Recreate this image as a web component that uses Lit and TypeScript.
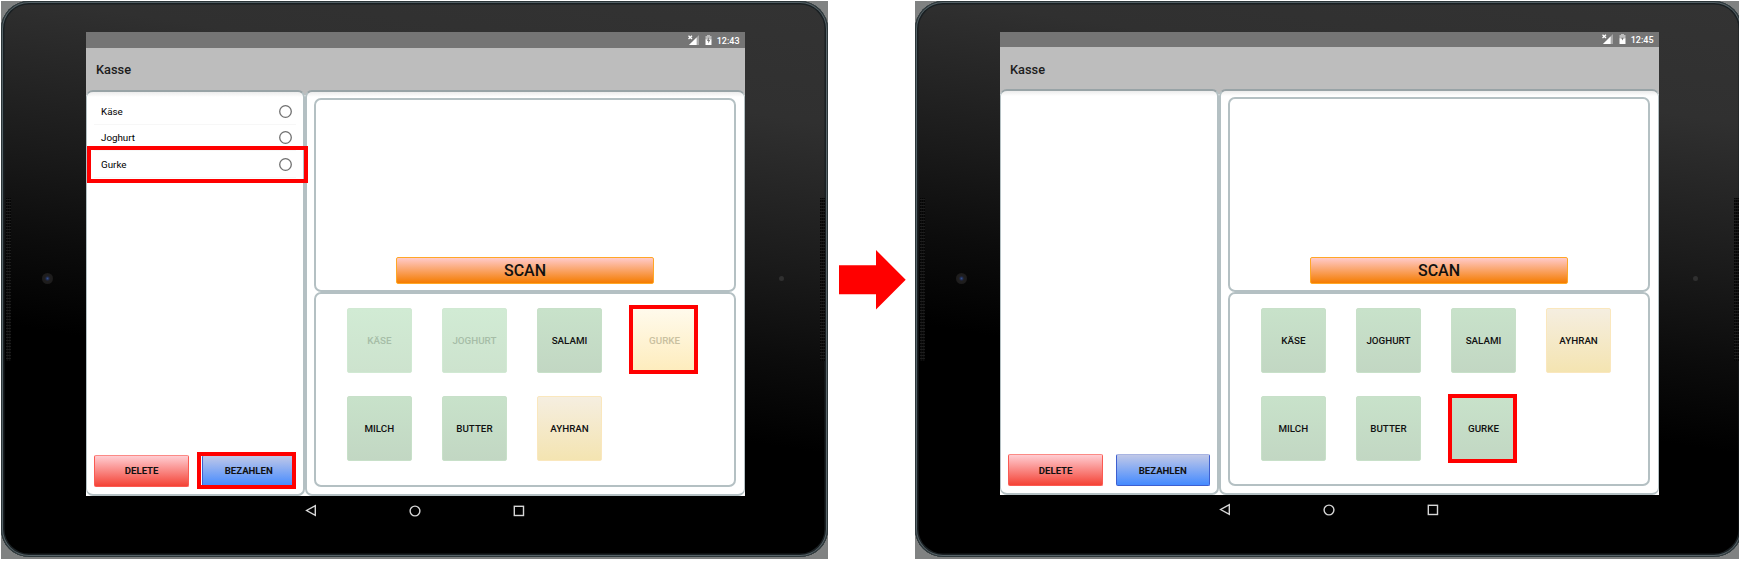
import { LitElement, html, css, svg, nothing } from "lit";
import { customElement, property } from "lit/decorators.js";
import { classMap } from "lit/directives/class-map.js";

interface Product {
  name: string;
  tone: "green" | "cream";
  used?: boolean;
  marked?: boolean;
}

@customElement("pos-tablet")
class PosTablet extends LitElement {
  @property() time = "";
  @property({ type: Boolean }) charging = false;
  @property({ type: Boolean }) payMarked = false;
  @property({ attribute: false }) cart: { name: string; marked?: boolean }[] = [];
  @property({ attribute: false }) products: Product[] = [];

  static styles = css`
    * { box-sizing: border-box; }
    :host {
      display: block;
      height: 558px;
      background: #808282;
      overflow: hidden;
      font-family: Roboto, "Liberation Sans", sans-serif;
      --line: #b4c0c3;
    }
    .body {
      width: 827px;
      height: 556px;
      display: grid;
      grid-template-columns: 85px 659px 1fr;
      border-radius: 28px;
      background: linear-gradient(189deg, #333 0%, #303030 18%, #1a1a1a 40%, #0c0c0c 53%, #000 66%);
      box-shadow: inset 0 0 0 1px #2c3639, inset 0 0 0 2px #566267, inset 0 0 0 3.5px #1a2023;
    }
    .side {
      display: flex;
      padding-top: 197px;
      align-items: flex-start;
    }
    .side.l { padding-left: 5px; }
    .side.r { padding-right: 3px; justify-content: flex-end; }
    .speaker {
      width: 5px;
      height: 163px;
      background: radial-gradient(circle, #1f1f1f 0.8px, #050505 1.2px) 0 0 / 2.5px 3px;
    }
    .cam {
      width: 11px;
      height: 11px;
      border-radius: 50%;
      margin: 74.5px 0 0 31px;
      background: radial-gradient(circle, #33508c 0, #1e2540 1.8px, #201f1f 2.6px, #1d1c1c 5px);
    }
    .sensor {
      width: 5px;
      height: 5px;
      border-radius: 50%;
      margin: 78px 36px 0 0;
      background: #303030;
    }
    .screen {
      padding-top: var(--top, 31.4px);
      display: flex;
      flex-direction: column;
    }
    .status {
      height: 15.8px;
      flex: none;
      background: #757575;
      color: #fff;
      display: flex;
      align-items: center;
      justify-content: flex-end;
      padding: 1px 5.5px 0 0;
      font-size: 9px;
      font-weight: 500;
    }
    .status svg { display: block; }
    .signal { margin-right: 5px; }
    .battery { margin-right: 4.4px; }
    .bar {
      height: 41.5px;
      flex: none;
      background: #bdbdbd;
      display: flex;
      align-items: center;
      padding: 2px 0 0 10px;
      font-size: 12.8px;
      font-weight: 500;
      color: #1c1c1c;
    }
    .content {
      height: 406px;
      flex: none;
      display: flex;
      background: linear-gradient(#bdbdbd 5px, #fff 5px);
    }
    .panel {
      border: 2px solid var(--line);
      border-radius: 7px;
      background: #fff;
    }
    .outer {
      border-top-color: #98a3a6;
      background: linear-gradient(#ececec, #fff 5px);
    }
    .basket {
      width: 219px;
      border-left-width: 1px;
      display: flex;
      flex-direction: column;
      justify-content: space-between;
      padding: 7px 7px 7px 7.4px;
    }
    .row {
      height: 26.4px;
      display: flex;
      align-items: center;
      justify-content: space-between;
      padding: 0 4px 0 6.6px;
      border-bottom: 1px solid #f7f7f7;
      font-size: 9.8px;
      color: #000;
      position: relative;
    }
    .radio {
      width: 13px;
      height: 13px;
      display: block;
    }
    .mark {
      position: absolute;
      border: 4px solid #f00;
      z-index: 2;
    }
    .row .mark { inset: -5.4px -11.6px -5.8px -7.4px; }
    .actions { display: flex; justify-content: space-between; }
    .btn {
      position: relative;
      display: flex;
      align-items: center;
      justify-content: center;
      border: 1px solid;
      border-radius: 2px;
      font-weight: 500;
      text-transform: uppercase;
      white-space: nowrap;
      color: #111;
    }
    .action { width: 94.5px; height: 31.6px; font-size: 9.6px; font-weight: 700; }
    .delete {
      border-color: #fb5a52;
      background: linear-gradient(#ffcdd2, #f44336);
      border-top-color: #fb8a86;
    }
    .pay {
      border-color: #3d5fd0;
      background: linear-gradient(#c0c8e8, #448aff);
      border-top-color: #a9b5e2;
    }
    .pay .mark { inset: -4.6px -0.8px -3.6px -5.6px; }
    .work {
      flex: 1;
      border-right-width: 1px;
      padding: 6.6px 8px 7px 7px;
      display: flex;
      flex-direction: column;
    }
    .scanner {
      height: var(--scanner, 193.8px);
      flex: none;
      display: flex;
      align-items: flex-end;
      justify-content: center;
      padding-bottom: 6.4px;
    }
    .scan {
      width: 258px;
      height: 26.6px;
      font-size: 16px;
      border-color: #ffa726;
      background: linear-gradient(#ffcaca, #f57c00);
    }
    .goods {
      flex: 1;
      display: grid;
      grid-template-columns: repeat(4, 64.7px);
      grid-auto-rows: 64.7px;
      column-gap: 30.4px;
      row-gap: 23.3px;
      padding: 14px 0 0 31px;
      align-content: start;
    }
    .tile { font-size: 9.8px; }
    .green { border-color: #c8e0c9; background: linear-gradient(#c8e2ca, #c2d7c3); }
    .cream { border-color: #fae7bd; background: linear-gradient(#f5eee0, #f4e4b1); }
    .used { color: #a6bda7; }
    .green.used { border-color: #d1e9d3; background: linear-gradient(#d1ebd4, #cde3ce); }
    .cream.used { border-color: #fff3d0; background: linear-gradient(#fffaec, #feecbc); color: #c9c0a0; }
    .tile .mark { top: var(--mark-top, -4px); left: -3.8px; width: 69px; height: 69px; }
    .nav {
      height: 30px;
      display: flex;
      align-items: center;
      justify-content: center;
      gap: 92.3px;
      padding-right: 1px;
    }
  `;

  render() {
    return html`
      <div class="body">
        <div class="side l"><div class="speaker"></div><div class="cam"></div></div>
        <div class="screen">
          <div class="status">
            <svg class="signal" width="12" height="11" viewBox="0 0 12 11">
              <path d="M11 0V10H1Z" fill="#a8a8a8" /><path d="M8.6 2.4V10H1Z" fill="#fff" />
              <path d="M0 0H5V5H0Z" fill="#757575" />
              <path d="M.5 .7L4 4M4 .7L.5 4" stroke="#fff" stroke-width="1.3" />
            </svg>
            <svg class="battery" width="7" height="11" viewBox="0 0 7 11">
              <path d="M2 0H5V1H6.5V5H.5V1H2Z" fill="#bdbdbd" />
              <path d="M.5 4.5H6.5V10H.5Z" fill="#fff" />
              ${this.charging
                ? svg`<path d="M3.8 2L2 6H3.3V8.6L5.1 5H3.8Z" fill="#757575"/>`
                : svg`<path d="M2.3 3.8H4.7L3.5 6.5Z" fill="#757575"/>`}
            </svg>
            <span>${this.time}</span>
          </div>
          <div class="bar">Kasse</div>
          <div class="content">
            <div class="panel outer basket">
              <div>
                ${this.cart.map(
                  (c) => html`<div class="row">
                    <span>${c.name}</span>
                    <svg class="radio" viewBox="0 0 13 13"><circle cx="6.5" cy="6.5" r="5.8" fill="none" stroke="#707070" stroke-width="1.3" /></svg>
                    ${c.marked ? html`<i class="mark"></i>` : nothing}
                  </div>`
                )}
              </div>
              <div class="actions">
                <div class="btn action delete">Delete</div>
                <div class="btn action pay">Bezahlen${this.payMarked ? html`<i class="mark"></i>` : nothing}</div>
              </div>
            </div>
            <div class="panel outer work">
              <div class="panel scanner"><div class="btn scan">Scan</div></div>
              <div class="panel goods">
                ${this.products.map(
                  (p) => html`<div class=${classMap({ btn: true, tile: true, [p.tone]: true, used: !!p.used })}>
                    ${p.name}${p.marked ? html`<i class="mark"></i>` : nothing}
                  </div>`
                )}
              </div>
            </div>
          </div>
          <div class="nav">
            <svg width="12" height="13" viewBox="0 0 12 13" fill="none" stroke="#d6d6d6" stroke-width="1.4"><path d="M10.3 1.6V11.4L1.6 6.5Z" /></svg>
            <svg width="12" height="12" viewBox="0 0 12 12" fill="none" stroke="#d6d6d6" stroke-width="1.4"><circle cx="6" cy="6" r="4.9" /></svg>
            <svg width="12" height="12" viewBox="0 0 12 12" fill="none" stroke="#d6d6d6" stroke-width="1.4"><rect x="1.3" y="1.3" width="9.2" height="9.2" /></svg>
          </div>
        </div>
        <div class="side r"><div class="sensor"></div><div class="speaker"></div></div>
      </div>
    `;
  }
}

@customElement("app-root")
class AppRoot extends LitElement {
  static styles = css`
    :host {
      display: grid;
      grid-template-columns: 827px 87px 824px;
      align-items: start;
      box-sizing: border-box;
      height: 561px;
      padding: 1px 0 0 1px;
      background: #fff;
      overflow: hidden;
    }
    .arrow { display: block; margin: 248px 0 0 11px; }
    .after { --top: 30.6px; --scanner: 194.6px; --mark-top: -2.8px; }
  `;

  private before: Product[] = [
    { name: "Käse", tone: "green", used: true },
    { name: "Joghurt", tone: "green", used: true },
    { name: "Salami", tone: "green" },
    { name: "Gurke", tone: "cream", used: true, marked: true },
    { name: "Milch", tone: "green" },
    { name: "Butter", tone: "green" },
    { name: "Ayhran", tone: "cream" },
  ];

  private after: Product[] = [
    { name: "Käse", tone: "green" },
    { name: "Joghurt", tone: "green" },
    { name: "Salami", tone: "green" },
    { name: "Ayhran", tone: "cream" },
    { name: "Milch", tone: "green" },
    { name: "Butter", tone: "green" },
    { name: "Gurke", tone: "green", marked: true },
  ];

  render() {
    return html`
      <pos-tablet
        time="12:43"
        .charging=${true}
        .payMarked=${true}
        .cart=${[{ name: "Käse" }, { name: "Joghurt" }, { name: "Gurke", marked: true }]}
        .products=${this.before}
      ></pos-tablet>
      <svg class="arrow" width="68" height="62" viewBox="0 0 68 62">
        <path d="M0 16.3H37V1L66.7 30.8L37 60.5V45.3H0Z" fill="#f00" />
      </svg>
      <pos-tablet class="after" time="12:45" .products=${this.after}></pos-tablet>
    `;
  }
}
